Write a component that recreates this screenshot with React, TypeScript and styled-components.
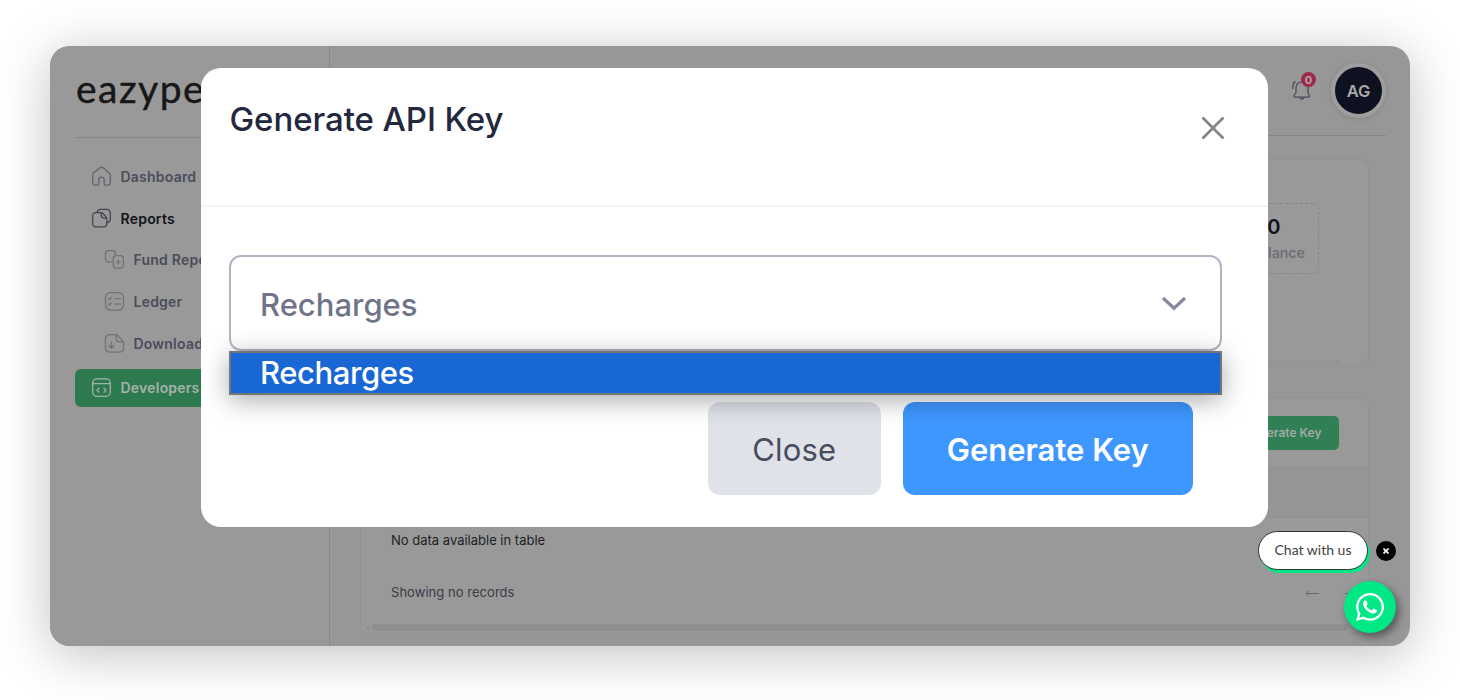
import React from "react";
import styled, { createGlobalStyle } from "styled-components";
import { FaWhatsapp } from "react-icons/fa";

const GlobalStyle = createGlobalStyle`
  *, *::before, *::after { box-sizing: border-box; }
  body { margin: 0; background: #fff; font-family: Inter, "Liberation Sans", sans-serif; }
  button { font-family: inherit; border: 0; padding: 0; background: none; }
`;

const Page = styled.div`
  width: 1460px;
  height: 700px;
  padding: 46px 50px 54px;
  overflow: hidden;
`;

const Frame = styled.div`
  position: relative;
  display: grid;
  grid-template-columns: 280px 1fr;
  height: 600px;
  border-radius: 20px;
  background: #979797;
  box-shadow: 0 8px 52px rgba(0, 0, 0, 0.25);
`;

const Sidebar = styled.aside`
  border-right: 1px solid #888;
  border-radius: 20px 0 0 20px;
  background: #999;
  padding: 0 25px;
`;

const Brand = styled.div`
  height: 92px;
  padding: 16px 0 0 1px;
  border-bottom: 1px solid #868686;
  color: #171717;
  font: 400 39px/52px Lato, sans-serif;
  letter-spacing: 1.5px;
  -webkit-text-stroke: 0.4px #171717;
`;

const Nav = styled.nav`
  padding-top: 19px;
`;

const NavItem = styled.a<{ $nested?: boolean; $active?: boolean; $color?: string; $gap?: number }>`
  display: flex;
  align-items: center;
  gap: 8.5px;
  height: 38px;
  margin-bottom: ${(p) => p.$gap ?? 4}px;
  padding-left: ${(p) => (p.$nested ? 29 : 16)}px;
  padding-bottom: ${(p) => (p.$active ? 2 : 0)}px;
  border-radius: 6px;
  background: ${(p) => (p.$active ? "#2d7a4f" : "transparent")};
  color: ${(p) => p.$color ?? "#4b4d5b"};
  font-size: 14px;
  font-weight: 600;
  letter-spacing: 0.22px;
  white-space: nowrap;
`;

const LineIcon = styled.svg<{ $tone: string }>`
  flex: none;
  width: 21px;
  height: 21px;
  fill: none;
  stroke: ${(p) => p.$tone};
  stroke-width: 1.25;
  stroke-linecap: round;
  stroke-linejoin: round;
`;

const Main = styled.main`
  display: flex;
  flex-direction: column;
  min-width: 0;
  padding: 0 24px 0 30px;
`;

const TopBar = styled.header`
  display: flex;
  align-items: center;
  justify-content: flex-end;
  gap: 18px;
  height: 90px;
  border-bottom: 1px solid #868686;
`;

const Bell = styled.div`
  position: relative;
  width: 22px;
  height: 24px;
`;

const Count = styled.span`
  position: absolute;
  top: -7px;
  left: 10px;
  width: 15px;
  height: 15px;
  border-radius: 50%;
  background: #9b2a4a;
  color: #b5a5ac;
  font-size: 11px;
  font-weight: 700;
  line-height: 16px;
  text-align: center;
`;

const Avatar = styled.div`
  width: 55px;
  height: 55px;
  border: 4px solid #9e9e9e;
  border-radius: 50%;
  background: #0e1220;
  box-shadow: 0 1px 5px rgba(0, 0, 0, 0.12);
  color: #a9a9a9;
  font-size: 16.5px;
  font-weight: 600;
  line-height: 49px;
  text-align: center;
`;

const Card = styled.section`
  display: flex;
  flex-direction: column;
  width: 1009px;
  border: 1px solid #929292;
  border-radius: 8px;
  background: #999;
`;

const BalanceCard = styled(Card)`
  height: 206px;
  margin-top: 23px;
  padding: 43px 49px 0 0;
  align-items: flex-end;
`;

const BalanceBox = styled.div`
  width: 110px;
  height: 71px;
  padding: 11px 13px 0 0;
  border: 1px dashed #858585;
  border-radius: 6px;
  text-align: right;
`;

const BalanceValue = styled.div`
  padding-right: 24.5px;
  color: #0c1018;
  font-size: 20px;
  font-weight: 600;
  line-height: 24px;
`;

const BalanceLabel = styled.div`
  color: #6b6c73;
  font-size: 14.3px;
  font-weight: 500;
  line-height: 27px;
`;

const CardScroll = styled.div`
  width: 978px;
  height: 4px;
  margin: 86px -20px 0 0;
  background: #959595;
`;

const KeysCard = styled(Card)`
  height: 237px;
  margin-top: 32px;
`;

const KeysHeader = styled.div`
  display: flex;
  align-items: center;
  justify-content: flex-end;
  height: 70px;
  padding-right: 29px;
  border-bottom: 1px solid #929292;
`;

const KeysButton = styled.button`
  width: 118px;
  height: 34px;
  padding-right: 17.5px;
  border-radius: 5px;
  background: #317f54;
  color: #a1aaa4;
  font-size: 12px;
  font-weight: 600;
  text-align: right;
`;

const TableHead = styled.div`
  height: 50px;
  border-bottom: 1px solid #929292;
  background: #959595;
`;

const TableRow = styled.div`
  height: 45px;
  padding-left: 30px;
  color: #1d1f23;
  font-size: 13px;
  line-height: 45px;
`;

const TableFooter = styled.div`
  display: flex;
  align-items: center;
  justify-content: space-between;
  height: 58px;
  padding: 0 9.5px 0 30px;
  color: #3b3b46;
  font-size: 13px;
  letter-spacing: 0.04px;
`;

const Pager = styled.div`
  display: flex;
  gap: 26px;
  padding-top: 2px;
  color: #66666d;
`;

const ScrollRow = styled.div`
  display: flex;
  align-items: center;
  gap: 3px;
  margin-top: 3px;
  padding-left: 5px;
`;

const ScrollArrow = styled.span`
  border: 3px solid transparent;
  border-left: 0;
  border-right-color: #8e8e8e;
`;

const ScrollThumb = styled.div`
  width: 975px;
  height: 7px;
  background: #8f8f8f;
`;

const Dialog = styled.div`
  position: absolute;
  top: 22px;
  left: 151px;
  width: 1066.5px;
  height: 459px;
  border-radius: 20px;
  background: #fff;
`;

const DialogHeader = styled.div`
  display: flex;
  justify-content: space-between;
  height: 139px;
  padding: 30px 42.5px 0 28.5px;
  border-bottom: 2px solid #f4f4f4;
`;

const DialogTitle = styled.h2`
  margin: 0;
  color: #24283f;
  font-size: 33px;
  font-weight: 500;
  line-height: 42px;
  letter-spacing: -0.08px;
`;

const CloseIcon = styled.svg`
  width: 24px;
  height: 24px;
  margin-top: 18px;
  stroke: #858585;
  stroke-width: 2.8;
`;

const DialogBody = styled.div`
  position: relative;
  padding: 48px 45.5px 0 28px;
`;

const Select = styled.div`
  display: flex;
  align-items: center;
  justify-content: space-between;
  height: 96px;
  padding: 3px 33px 0 29px;
  border: 2px solid #b5b3c3;
  border-radius: 12px;
  color: #6f7489;
  font-size: 31px;
  font-weight: 500;
`;

const Chevron = styled.svg`
  width: 26px;
  height: 16px;
  margin-top: -4px;
  fill: none;
  stroke: #858a9e;
  stroke-width: 3.2;
`;

const Options = styled.div`
  position: absolute;
  top: 144px;
  left: 28px;
  width: 993px;
  height: 44px;
  padding-left: 29px;
  border: 2px solid #757575;
  background: #1967d5;
  box-shadow: 0 5px 26px rgba(0, 0, 0, 0.34);
  color: #fff;
  font-size: 31px;
  font-weight: 500;
  line-height: 40px;
  letter-spacing: -0.42px;
`;

const Actions = styled.div`
  display: flex;
  justify-content: flex-end;
  gap: 22px;
  padding: 50.5px 28px 0 0;
  margin-right: 1px;
`;

const Action = styled.button<{ $primary?: boolean }>`
  width: ${(p) => (p.$primary ? 290.5 : 172.5)}px;
  height: 93.5px;
  padding-top: 2px;
  border-radius: 12px;
  background: ${(p) => (p.$primary ? "#3e97ff" : "#e0e2ea")};
  color: ${(p) => (p.$primary ? "#fff" : "#4a4b5c")};
  font-size: 31px;
  font-weight: ${(p) => (p.$primary ? 600 : 400)};
  letter-spacing: ${(p) => (p.$primary ? 0 : 0.2)}px;
`;

const ChatLabel = styled.div`
  position: absolute;
  top: 485px;
  left: 1208px;
  width: 110px;
  height: 39px;
  border: 1px solid #333;
  border-radius: 20px;
  background: #fff;
  box-shadow: 2px 3px 0 #00e785;
  color: #414141;
  font: 400 14px/36px Lato, sans-serif;
  text-align: center;
`;

const ChatDismiss = styled.button`
  position: absolute;
  top: 495px;
  left: 1326px;
  display: grid;
  place-items: center;
  width: 20px;
  height: 20px;
  border-radius: 50%;
  background: #000;
`;

const ChatButton = styled.button`
  position: absolute;
  top: 535px;
  left: 1294px;
  display: grid;
  place-items: center;
  width: 52px;
  height: 52px;
  border-radius: 50%;
  background: #00e785;
  box-shadow: 3px 4px 9px rgba(0, 0, 0, 0.45);
  color: #fff;
`;

const Arrow = ({ flip }: { flip?: boolean }) => (
  <svg width="14" height="7" viewBox="0 0 14 7" fill="none" stroke="currentColor">
    <path d={flip ? "M0 3.5H13M10.5 1L13 3.5L10.5 6" : "M14 3.5H1M3.5 1L1 3.5L3.5 6"} />
  </svg>
);

export default function App() {
  return (
    <>
      <GlobalStyle />
      <Page>
        <Frame>
          <Sidebar>
            <Brand>eazype</Brand>
            <Nav>
              <NavItem>
                <LineIcon $tone="#62636e" viewBox="0 0 21 21">
                  <path d="M1.7 9.2Q1.7 7.7 2.9 6.7L8.5 2Q10.5.5 12.5 2L18 6.7Q19.3 7.7 19.3 9.2V16.5Q19.3 19.2 16.5 19.2H14.5Q13.2 19.2 13.2 17.8V13.7Q13.2 11.1 10.5 11.1Q7.8 11.1 7.8 13.7V17.8Q7.8 19.2 6.5 19.2H4.5Q1.7 19.2 1.7 16.5Z" />
                </LineIcon>
                Dashboard
              </NavItem>
              <NavItem $color="#111319" $gap={3}>
                <LineIcon $tone="#43434f" viewBox="0 0 21 21">
                  <path d="M6 4.5Q6.6 1.3 9.5 1.3H15.5Q19.3 1.3 19.3 5.2V11Q19.3 14 16.2 14.6" />
                  <path d="M10.5 4.5H5.2Q1.7 4.5 1.7 8V15.5Q1.7 18.8 5.2 18.8H12.5Q15.8 18.8 15.8 15.5V10.8Q15.8 9.6 14.9 8.7L11.7 5.3Q11 4.5 10.5 4.5ZM10.3 4.5V7.5Q10.3 10.1 13 10.1H15.8" />
                </LineIcon>
                Reports
              </NavItem>
              <NavItem $nested>
                <LineIcon $tone="#717178" viewBox="0 0 21 21">
                  <path d="M7.5 13H4.5Q1.5 13 1.5 10V4.5Q1.5 1.5 4.5 1.5H8.5Q11.5 1.5 11.5 4.5V6" />
                  <rect x="9.2" y="6.5" width="10.2" height="12.5" rx="3" />
                  <path d="M14.3 11v3.6M12.5 12.8h3.6" />
                </LineIcon>
                Fund Reports
              </NavItem>
              <NavItem $nested>
                <LineIcon $tone="#717178" viewBox="0 0 21 21">
                  <rect x="1.5" y="1.5" width="18" height="17.5" rx="5" />
                  <path d="M4.5 7.5l1 1l2.2-2.2M4.5 13l1 1l2.2-2.2M11 7.5h5.5M11 13h5.5" />
                </LineIcon>
                Ledger
              </NavItem>
              <NavItem $nested $gap={7}>
                <LineIcon $tone="#717178" viewBox="0 0 21 21">
                  <path d="M11.5 1.5H5.5Q1.5 1.5 1.5 5.5V15Q1.5 19 5.5 19H15.5Q19.5 19 19.5 15V10Q19.5 8.8 18.7 8L13.5 2.3Q12.7 1.5 11.5 1.5ZM12.2 1.8V5.5Q12.2 8.8 15.5 8.8H19.3M7.5 9v6M5 12.7L7.5 15.2L10 12.7" />
                </LineIcon>
                Download
              </NavItem>
              <NavItem $active $color="#a5b2ab">
                <LineIcon $tone="#a5b2ab" viewBox="0 0 21 21">
                  <rect x="1.7" y="1.8" width="17.6" height="17.5" rx="4" />
                  <path d="M1.7 6.7h17.6M8 11.2l-2 2l2 2M13 11.2l2 2l-2 2" />
                </LineIcon>
                Developers
              </NavItem>
            </Nav>
          </Sidebar>

          <Main>
            <TopBar>
              <Bell>
                <LineIcon $tone="#4b4c5c" viewBox="0 0 21 21">
                  <path d="M4.4 18.2H17Q18.8 18.2 18.2 16.5L17 13.5V9Q17 3.2 10.9 3.2Q5.2 3.2 5 9V13.5L3.1 16.5Q2.5 18.2 4.4 18.2ZM9 19Q10.8 21.2 12.6 19M1.7 9.5Q1.5 5 4 2.5" />
                </LineIcon>
                <Count>0</Count>
              </Bell>
              <Avatar>AG</Avatar>
            </TopBar>

            <BalanceCard>
              <BalanceBox>
                <BalanceValue>0</BalanceValue>
                <BalanceLabel>Balance</BalanceLabel>
              </BalanceBox>
              <CardScroll />
            </BalanceCard>

            <KeysCard>
              <KeysHeader>
                <KeysButton>Generate Key</KeysButton>
              </KeysHeader>
              <TableHead />
              <TableRow>No data available in table</TableRow>
              <TableFooter>
                Showing no records
                <Pager>
                  <Arrow />
                  <Arrow flip />
                </Pager>
              </TableFooter>
              <ScrollRow>
                <ScrollArrow />
                <ScrollThumb />
              </ScrollRow>
            </KeysCard>
          </Main>

          <Dialog role="dialog">
            <DialogHeader>
              <DialogTitle>Generate API Key</DialogTitle>
              <CloseIcon viewBox="0 0 24 24">
                <path d="M1.5 1.5L22.5 22.5M22.5 1.5L1.5 22.5" />
              </CloseIcon>
            </DialogHeader>
            <DialogBody>
              <Select>
                Recharges
                <Chevron viewBox="0 0 26 16">
                  <path d="M2 3L13 13.2L24 3" />
                </Chevron>
              </Select>
              <Actions>
                <Action>Close</Action>
                <Action $primary>Generate Key</Action>
              </Actions>
              <Options>Recharges</Options>
            </DialogBody>
          </Dialog>

          <ChatLabel>Chat with us</ChatLabel>
          <ChatDismiss aria-label="Dismiss">
            <svg width="6" height="6" viewBox="0 0 6 6" stroke="#fff" strokeWidth="1.6">
              <path d="M.5.5L5.5 5.5M5.5.5L.5 5.5" />
            </svg>
          </ChatDismiss>
          <ChatButton aria-label="WhatsApp">
            <FaWhatsapp size={32} />
          </ChatButton>
        </Frame>
      </Page>
    </>
  );
}
